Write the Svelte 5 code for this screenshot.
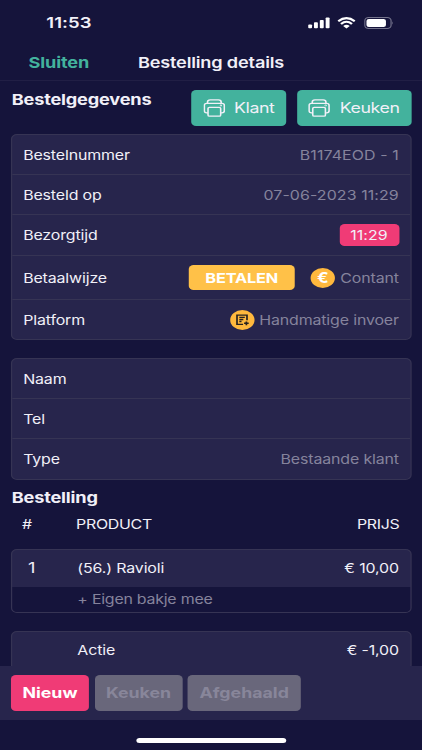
<script lang="ts">
  interface Item {
    qty: string
    name: string
    price: string
    extra?: string
  }

  const items: Item[] = [
    { qty: '1', name: '(56.) Ravioli', price: '€ 10,00', extra: '+ Eigen bakje mee' },
    { qty: '', name: 'Actie', price: '€ -1,00' },
  ]

  const actions = ['Nieuw', 'Keuken', 'Afgehaald']
  let current = $state('Nieuw')
</script>

{#snippet printer()}
  <svg class="printer" viewBox="0 0 18 18" aria-hidden="true">
    <path d="M3.4 4.3V3Q3.4 .8 5.6 .8H12.4Q14.6 .8 14.6 3V4.3" />
    <path d="M3.8 13.8H2.8Q.8 13.8 .8 11.8V6.3Q.8 4.3 2.8 4.3H15.2Q17.2 4.3 17.2 6.3V11.8Q17.2 13.8 15.2 13.8H14.2" />
    <rect x="3.8" y="8.3" width="10.4" height="8.8" rx="1.2" />
    <circle cx="14.4" cy="6.4" r=".3" />
  </svg>
{/snippet}

<div class="screen">
  <div class="status">
    <span class="clock">11:53</span>
    <div class="indicators">
      <svg width="18" height="12" viewBox="0 0 18 12" aria-hidden="true">
        <rect x="0" y="7.4" width="3.2" height="3.8" rx=".8" />
        <rect x="4.8" y="5.3" width="3.2" height="5.9" rx=".8" />
        <rect x="9.6" y="3" width="3.2" height="8.2" rx=".8" />
        <rect x="14.4" y=".5" width="3.2" height="10.7" rx=".8" />
      </svg>
      <svg class="wifi" width="15" height="12" viewBox="0 0 15 12" aria-hidden="true">
        <path d="M.7 4.2Q7.5-2 14.3 4.2" />
        <path d="M3 6.9Q7.5 2.7 12 6.9" />
        <path class="dot" d="M4.8 9Q7.5 6.7 10.2 9L7.5 11.6Z" />
      </svg>
      <svg width="24" height="12" viewBox="0 0 24 12" aria-hidden="true">
        <rect class="shell" x=".5" y=".5" width="21.6" height="11" rx="3.2" />
        <rect x="1.9" y="2" width="16" height="8" rx="2" />
        <path class="cap" d="M23 4.3Q24.4 6 23 7.7Z" />
      </svg>
    </div>
  </div>

  <header>
    <button class="close">Sluiten</button>
    <h1>Bestelling details</h1>
  </header>

  <main>
    <div class="section-head">
      <h2>Bestelgegevens</h2>
      <button class="print">{@render printer()}<span>Klant</span></button>
      <button class="print keuken">{@render printer()}<span>Keuken</span></button>
    </div>

    <div class="card details">
      <div class="row"><span>Bestelnummer</span><span class="value number">B1174EOD - 1</span></div>
      <div class="row"><span>Besteld op</span><span class="value number">07-06-2023 11:29</span></div>
      <div class="row time"><span>Bezorgtijd</span><span class="badge number">11:29</span></div>
      <div class="row payment">
        <span>Betaalwijze</span>
        <button class="pay">BETALEN</button>
        <span class="coin">€</span>
        <span class="value">Contant</span>
      </div>
      <div class="row">
        <span>Platform</span>
        <span class="coin manual">
          <svg width="12" height="12" viewBox="0 0 12 12" aria-hidden="true">
            <path d="M6.6 10.4H1.6V1.1H9.8V6.2" />
            <path d="M3.5 3.4H8M3.5 5.5H6.8M3.5 7.5H5.3M9.3 7.4V11.2M7.4 9.3H11.2" />
          </svg>
        </span>
        <span class="value">Handmatige invoer</span>
      </div>
    </div>

    <div class="card customer">
      <div class="row"><span>Naam</span></div>
      <div class="row"><span>Tel</span></div>
      <div class="row type"><span>Type</span><span class="value">Bestaande klant</span></div>
    </div>

    <h2>Bestelling</h2>
    <div class="line columns">
      <span class="hash">#</span>
      <span>PRODUCT</span>
      <span class="price">PRIJS</span>
    </div>

    {#each items as item}
      <div class="card item">
        <div class="line product">
          <span class="qty">{item.qty}</span>
          <span>{item.name}</span>
          <span class="price">{item.price}</span>
        </div>
        {#if item.extra}
          <div class="line extra"><span></span><span>{item.extra}</span></div>
        {/if}
      </div>
    {/each}
  </main>

  <footer>
    {#each actions as action}
      <button class="action" class:active={action === current} onclick={() => (current = action)}>
        {action}
      </button>
    {/each}
  </footer>
  <div class="home"><span></span></div>
</div>

<style>
  :global(body) {
    background: #15143b;
    overflow: hidden;
  }

  /* The whole screen is drawn wider than it is laid out. */
  .screen {
    display: flex;
    flex-direction: column;
    width: 346.5px;
    height: 750px;
    overflow: hidden;
    transform: scaleX(1.2179);
    transform-origin: 0 0;
    background: #15143b;
    color: #f1f0f8;
    font-family: Inter, 'Liberation Sans', sans-serif;
    font-size: 13.1px;
    letter-spacing: -0.12px;
    line-height: 16px;
    white-space: nowrap;
  }

  button {
    padding: 0;
    border: 0;
    background: none;
    color: inherit;
    font: inherit;
    letter-spacing: inherit;
  }

  h1,
  h2 {
    margin: 0;
    font-size: 14.9px;
    letter-spacing: -0.14px;
    line-height: 18px;
  }

  .status {
    display: flex;
    flex: none;
    align-items: center;
    justify-content: space-between;
    height: 46px;
    padding: 0 23.5px 0 38px;
  }

  .clock {
    font-size: 15.2px;
    font-weight: 600;
    letter-spacing: 0.05px;
  }

  .indicators {
    display: flex;
    gap: 6.5px;
    fill: #fff;
  }

  .wifi {
    margin: 0 0.5px 0 -0.5px;
  }

  .wifi path {
    fill: none;
    stroke: #fff;
    stroke-width: 2;
  }

  .wifi .dot {
    fill: #fff;
    stroke: none;
  }

  .shell {
    fill: none;
    stroke: #74738c;
  }

  .cap {
    fill: #74738c;
  }

  header {
    display: grid;
    flex: none;
    grid-template-columns: 1fr auto 1fr;
    align-items: center;
    height: 34px;
    border-bottom: 1px solid #211f45;
  }

  .close {
    justify-self: start;
    margin-left: 23.5px;
    color: #43b29d;
    font-size: 14.9px;
    font-weight: 700;
  }

  h1 {
    font-weight: 600;
  }

  main {
    flex: 1;
    min-height: 0;
    overflow: hidden;
    padding: 9px 9px 0;
  }

  .section-head {
    display: flex;
    height: 44px;
  }

  .section-head h2 {
    margin-right: auto;
    padding-top: 1px;
  }

  h2 {
    padding-left: 0.6px;
  }

  .print {
    display: flex;
    align-items: center;
    justify-content: center;
    gap: 7.5px;
    width: 78px;
    height: 35.5px;
    border-radius: 4px;
    background: #43b29d;
    font-size: 14.6px;
    letter-spacing: -0.35px;
  }

  .print.keuken {
    width: 93.5px;
    margin-left: 9px;
  }

  .printer {
    width: 18px;
    height: 18px;
    fill: none;
    stroke: #f1f0f8;
    stroke-width: 1.3;
  }

  .card {
    border: 1px solid #363454;
    border-radius: 5px;
    overflow: hidden;
    background: #27254c;
  }

  .row {
    display: flex;
    align-items: center;
    height: 39px;
    padding: 0 9px;
    border-bottom: 1px solid #363454;
  }

  .row:last-child {
    border-bottom: 0;
  }

  .row > span:first-child {
    margin-right: auto;
  }

  .row.time,
  .row.type {
    height: 40px;
  }

  .row.payment {
    height: 43px;
  }

  .value {
    color: #85839c;
  }

  .number {
    letter-spacing: 0.08px;
  }

  .badge {
    width: 49px;
    border-radius: 4px;
    background: #f03b76;
    line-height: 22px;
    text-align: center;
  }

  .pay {
    width: 87px;
    height: 25px;
    margin-right: 13px;
    border-radius: 4px;
    background: #ffc148;
    color: #fff;
    font-size: 13.4px;
    font-weight: 700;
  }

  .coin {
    display: flex;
    align-items: center;
    justify-content: center;
    width: 20px;
    height: 20px;
    margin-right: 4.5px;
    border-radius: 50%;
    background: #ffb83d;
    color: #fff;
    font-size: 14px;
    font-weight: 700;
  }

  .manual {
    margin-right: 3.8px;
  }

  .manual svg {
    fill: none;
    stroke: #27211f;
    stroke-width: 1.4;
  }

  .customer {
    margin: 18px 0 9px;
  }

  .line {
    display: grid;
    grid-template-columns: 53.5px 1fr auto;
    align-items: center;
  }

  .columns {
    height: 33px;
    margin-bottom: 9px;
    padding-right: 9.5px;
    letter-spacing: -0.25px;
  }

  .hash {
    padding-left: 9px;
  }

  .item {
    margin-bottom: 18px;
  }

  .product {
    height: 36px;
    padding: 0 9px 1px 0;
  }

  .qty {
    padding-left: 13px;
    font-size: 15px;
  }

  .extra {
    height: 24px;
    padding-bottom: 0.5px;
    background: #15143b;
    color: #85839c;
    letter-spacing: -0.2px;
  }

  footer {
    display: flex;
    flex: none;
    gap: 4.5px;
    height: 44.5px;
    padding: 9px 9px 0;
    background: #27254c;
  }

  .action {
    height: 35.5px;
    padding: 0 9.4px;
    border-radius: 4px;
    background: #69677b;
    color: #88869a;
    font-size: 14.6px;
    font-weight: 700;
    letter-spacing: 0;
  }

  .action.active {
    background: #f03b76;
    color: #fff;
  }

  .home {
    display: flex;
    flex: none;
    justify-content: center;
    height: 30.5px;
  }

  .home span {
    width: 123px;
    height: 5px;
    margin-top: 18px;
    border-radius: 3px;
    background: #fff;
  }
</style>
